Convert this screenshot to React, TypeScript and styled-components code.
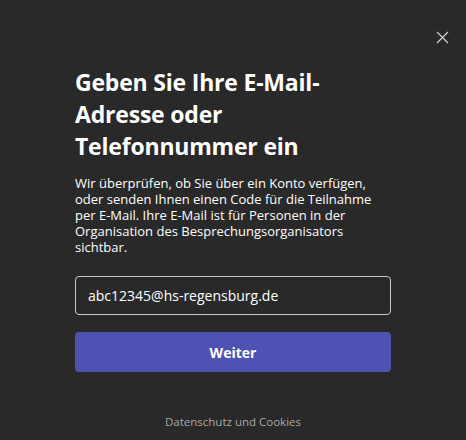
import React, { useState } from 'react';
import styled, { createGlobalStyle } from 'styled-components';

const GlobalStyle = createGlobalStyle`
  html, body {
    margin: 0;
    padding: 0;
    background: #292929;
  }
  * {
    box-sizing: border-box;
  }
`;

const Screen = styled.div`
  position: relative;
  width: 466px;
  height: 440px;
  background: #292929;
  color: #ffffff;
  font-family: 'Open Sans', 'Noto Sans', sans-serif;
  display: flex;
  flex-direction: column;
  align-items: center;
`;

const CloseButton = styled.button`
  position: absolute;
  top: 26px;
  right: 13px;
  width: 22px;
  height: 22px;
  padding: 0;
  border: none;
  background: transparent;
  display: flex;
  align-items: center;
  justify-content: center;
  cursor: pointer;
`;

const Content = styled.div`
  width: 316px;
  margin-top: 66px;
  display: flex;
  flex-direction: column;
`;

const Title = styled.h1`
  margin: 0;
  font-size: 23px;
  line-height: 32px;
  font-weight: 700;
  letter-spacing: -0.2px;
  color: #ffffff;
`;

const Description = styled.p`
  margin: 13px 0 0;
  font-size: 13px;
  line-height: 16px;
  color: #ffffff;
`;

const EmailInput = styled.input`
  margin-top: 21px;
  width: 100%;
  height: 39px;
  padding: 0 12px;
  border: 1px solid #c8c8c8;
  border-radius: 4px;
  background: transparent;
  color: #ffffff;
  font-family: inherit;
  font-size: 14px;
  outline: none;
`;

const PrimaryButton = styled.button`
  margin-top: 17px;
  width: 100%;
  height: 40px;
  border: none;
  border-radius: 4px;
  background: #4f52b2;
  color: #ffffff;
  font-family: inherit;
  font-size: 14px;
  font-weight: 700;
  cursor: pointer;
`;

const FooterLink = styled.a`
  margin-top: 42px;
  font-size: 11.5px;
  color: #a8a8a8;
  text-decoration: none;
  text-align: center;
`;

const CloseIcon = () => (
  <svg width="13" height="13" viewBox="0 0 13 13" fill="none">
    <path d="M1 1L12 12M12 1L1 12" stroke="#d6d6d6" strokeWidth="1.1" />
  </svg>
);

export default function App() {
  const [email, setEmail] = useState('abc12345@hs-regensburg.de');

  return (
    <Screen>
      <GlobalStyle />
      <CloseButton aria-label="Schließen">
        <CloseIcon />
      </CloseButton>
      <Content>
        <Title>Geben Sie Ihre E-Mail-Adresse oder Telefonnummer ein</Title>
        <Description>
          Wir überprüfen, ob Sie über ein Konto verfügen, oder senden Ihnen einen Code für die
          Teilnahme per E-Mail. Ihre E-Mail ist für Personen in der Organisation des
          Besprechungsorganisators sichtbar.
        </Description>
        <EmailInput value={email} onChange={e => setEmail(e.target.value)} />
        <PrimaryButton>Weiter</PrimaryButton>
        <FooterLink href="#">Datenschutz und Cookies</FooterLink>
      </Content>
    </Screen>
  );
}
